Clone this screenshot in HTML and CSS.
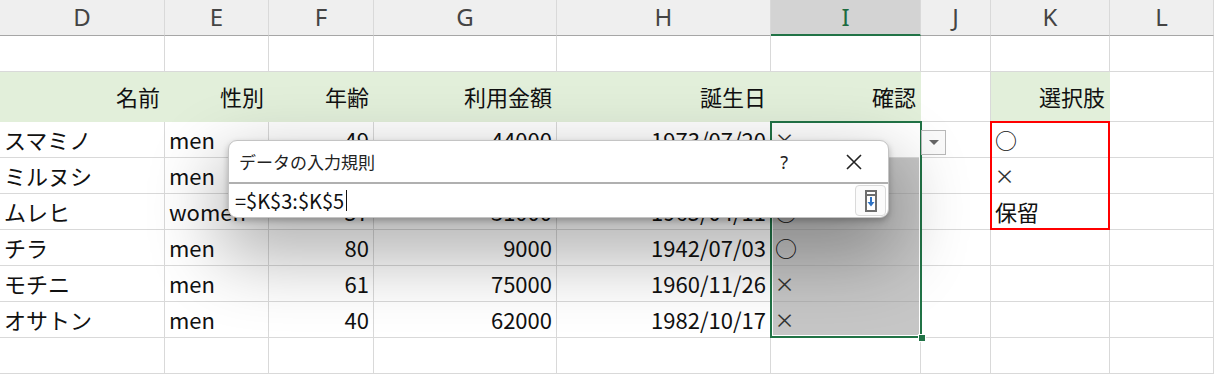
FILE: index.html
```html
<!DOCTYPE html>
<html lang="ja">
<head>
    <title>データの入力規則</title>
    <meta charset="utf-8">
    <link rel="stylesheet" href="styles.css">
</head>
<body>
    <div class="sheet">
        <div class="grid">
            <div class="cell head">D</div>
            <div class="cell head">E</div>
            <div class="cell head">F</div>
            <div class="cell head">G</div>
            <div class="cell head">H</div>
            <div class="cell head sel">I</div>
            <div class="cell head">J</div>
            <div class="cell head">K</div>
            <div class="cell head">L</div>

            <div class="cell"></div>
            <div class="cell"></div>
            <div class="cell"></div>
            <div class="cell"></div>
            <div class="cell"></div>
            <div class="cell"></div>
            <div class="cell"></div>
            <div class="cell"></div>
            <div class="cell"></div>

            <div class="cell fill num">名前</div>
            <div class="cell fill num">性別</div>
            <div class="cell fill num">年齢</div>
            <div class="cell fill num">利用金額</div>
            <div class="cell fill num">誕生日</div>
            <div class="cell fill num">確認</div>
            <div class="cell"></div>
            <div class="cell fill num">選択肢</div>
            <div class="cell"></div>

            <div class="cell">スマミノ</div>
            <div class="cell">men</div>
            <div class="cell num">49</div>
            <div class="cell num">44000</div>
            <div class="cell num">1973/07/20</div>
            <div class="cell cross">×</div>
            <div class="cell"></div>
            <div class="cell circle">○</div>
            <div class="cell"></div>

            <div class="cell">ミルヌシ</div>
            <div class="cell">men</div>
            <div class="cell num"></div>
            <div class="cell num"></div>
            <div class="cell num"></div>
            <div class="cell shade"></div>
            <div class="cell"></div>
            <div class="cell cross">×</div>
            <div class="cell"></div>

            <div class="cell">ムレヒ</div>
            <div class="cell">women</div>
            <div class="cell num">57</div>
            <div class="cell num">31000</div>
            <div class="cell num">1965/04/11</div>
            <div class="cell circle shade">○</div>
            <div class="cell"></div>
            <div class="cell">保留</div>
            <div class="cell"></div>

            <div class="cell">チラ</div>
            <div class="cell">men</div>
            <div class="cell num">80</div>
            <div class="cell num">9000</div>
            <div class="cell num">1942/07/03</div>
            <div class="cell circle shade">○</div>
            <div class="cell"></div>
            <div class="cell"></div>
            <div class="cell"></div>

            <div class="cell">モチニ</div>
            <div class="cell">men</div>
            <div class="cell num">61</div>
            <div class="cell num">75000</div>
            <div class="cell num">1960/11/26</div>
            <div class="cell cross shade">×</div>
            <div class="cell"></div>
            <div class="cell"></div>
            <div class="cell"></div>

            <div class="cell">オサトン</div>
            <div class="cell">men</div>
            <div class="cell num">40</div>
            <div class="cell num">62000</div>
            <div class="cell num">1982/10/17</div>
            <div class="cell cross shade">×</div>
            <div class="cell"></div>
            <div class="cell"></div>
            <div class="cell"></div>

            <div class="cell"></div>
            <div class="cell"></div>
            <div class="cell"></div>
            <div class="cell"></div>
            <div class="cell"></div>
            <div class="cell"></div>
            <div class="cell"></div>
            <div class="cell"></div>
            <div class="cell"></div>
        </div>

        <div class="selection"><span class="handle"></span></div>
        <div class="source-range"></div>
        <div class="dropdown"><span class="caret"></span></div>

        <div class="dialog">
            <div class="dialog-title">
                <span class="title-text">データの入力規則</span>
                <span class="help">?</span>
                <svg class="close" width="16" height="16" viewBox="0 0 16 16">
                    <path d="M1 1 L15 15 M15 1 L1 15" stroke="#222" stroke-width="1.6" fill="none"/>
                </svg>
            </div>
            <div class="dialog-input">
                <span class="formula">=$K$3:$K$5</span><span class="cursor"></span>
                <div class="ref-button">
                    <svg width="12" height="22" viewBox="0 0 12 22">
                        <rect x="0" y="0" width="12" height="22" fill="#6e6e6e"/>
                        <rect x="2" y="2" width="8" height="2" fill="#fff"/>
                        <rect x="2" y="6" width="8" height="14" fill="#fff"/>
                        <path d="M5 7 H7 V12 H9.5 L6 16.5 L2.5 12 H5 Z" fill="#2e72c4"/>
                    </svg>
                </div>
            </div>
        </div>
    </div>
</body>
</html>
```

FILE: styles.css
```css
* {
    box-sizing: border-box;
}

body {
    margin: 0;
    background-color: white;
    font-family: "Noto Sans CJK JP", "Noto Sans", sans-serif;
    color: #111;
    overflow: hidden;
}

.sheet {
    position: relative;
    width: 1214px;
    height: 374px;
}

.grid {
    display: grid;
    grid-template-columns: 165px 104px 105px 183px 214px 150px 70px 119px 104px;
    grid-template-rows: 36px 36px 50px repeat(7, 36px);
}

.cell {
    display: flex;
    align-items: center;
    padding: 0 4px;
    border-right: 1px solid #d9d9d9;
    border-bottom: 1px solid #d9d9d9;
    font-size: 22px;
    line-height: 1.2;
    white-space: nowrap;
}

.head {
    justify-content: center;
    background-color: #efefef;
    border-bottom: 1px solid #a6a6a6;
    font-family: "Noto Sans", sans-serif;
    font-size: 24px;
    color: #444;
}

.head.sel {
    background-color: #d3d3d3;
    border-bottom: 2px solid #217346;
    color: #1d6b40;
}

.fill {
    background-color: #e2efda;
    border-color: #e2efda;
}

.num {
    justify-content: flex-end;
}

.cross {
    padding-left: 5px;
    font-family: "Noto Sans", sans-serif;
    font-size: 30px;
    font-weight: 300;
    line-height: 1;
    color: #333;
}

.circle {
    padding-left: 4px;
}

.shade {
    background-color: #c6c6c6;
    border-bottom-color: #b5b5b5;
}

.selection {
    position: absolute;
    left: 770px;
    top: 121px;
    width: 152px;
    height: 217px;
    border: 2px solid #217346;
    box-shadow: inset 0 0 0 1px white;
}

.handle {
    position: absolute;
    right: -6px;
    bottom: -6px;
    width: 8px;
    height: 8px;
    background-color: #217346;
    border: 1px solid white;
}

.source-range {
    position: absolute;
    left: 990px;
    top: 121px;
    width: 120px;
    height: 109px;
    border: 2px solid #ff0000;
}

.dropdown {
    position: absolute;
    left: 921px;
    top: 130px;
    width: 25px;
    height: 25px;
    background-color: #fafafa;
    border: 1px solid #b9b9b9;
    display: flex;
    align-items: center;
    justify-content: center;
}

.caret {
    width: 0;
    height: 0;
    border-left: 5px solid transparent;
    border-right: 5px solid transparent;
    border-top: 5px solid #666;
}

.dialog {
    position: absolute;
    left: 228px;
    top: 140px;
    width: 661px;
    height: 78px;
    background-color: white;
    border: 1px solid #c4c4c4;
    border-radius: 9px;
    box-shadow: 0 3px 6px rgba(0, 0, 0, 0.25), 0 30px 70px 10px rgba(0, 0, 0, 0.3);
    display: flex;
    flex-direction: column;
}

.dialog-title {
    height: 43px;
    display: flex;
    align-items: center;
    padding: 0 26px 0 10px;
    border-bottom: 2px solid #b0b0b0;
    font-size: 17px;
    color: #222;
}

.title-text {
    flex: 1;
}

.help {
    font-family: "Noto Sans", sans-serif;
    font-size: 18px;
    margin-right: 58px;
}

.dialog-input {
    flex: 1;
    display: flex;
    align-items: center;
    padding: 0 2px 0 6px;
    font-size: 20px;
    color: #111;
}

.cursor {
    width: 1px;
    height: 21px;
    margin-left: 2px;
    background-color: #111;
}

.ref-button {
    margin-left: auto;
    width: 31px;
    height: 31px;
    border: 1px solid #dadada;
    border-radius: 4px;
    background-color: #fbfbfb;
    display: flex;
    align-items: center;
    justify-content: center;
}
```
